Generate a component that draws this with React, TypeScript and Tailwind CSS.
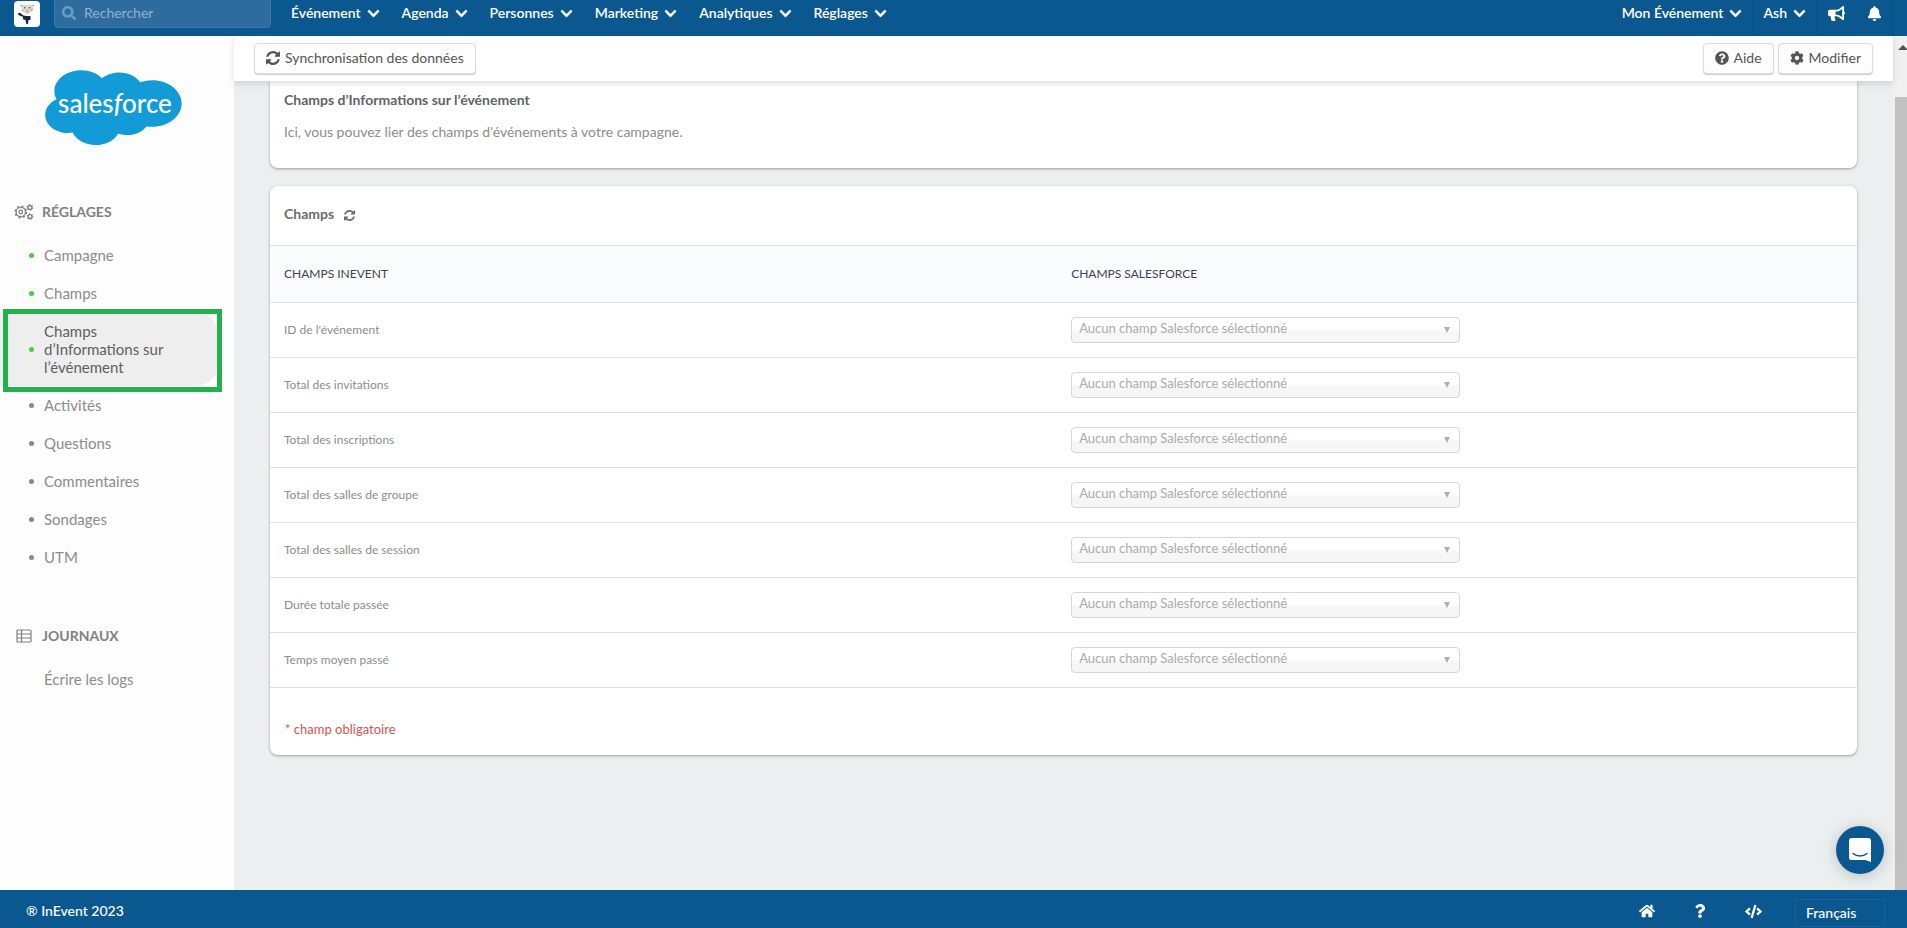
import React from "react";
import {
  FaBell,
  FaBullhorn,
  FaChevronDown,
  FaCode,
  FaCog,
  FaHome,
  FaQuestion,
  FaQuestionCircle,
  FaSearch,
} from "react-icons/fa";

const menus = ["Événement", "Agenda", "Personnes", "Marketing", "Analytiques", "Réglages"];

const settings = [
  { label: "Campagne", done: true },
  { label: "Champs", done: true },
  { label: "Champs d’Informations sur l’événement", done: true, active: true },
  { label: "Activités", done: false },
  { label: "Questions", done: false },
  { label: "Commentaires", done: false },
  { label: "Sondages", done: false },
  { label: "UTM", done: false },
];

const fields = [
  "ID de l'événement",
  "Total des invitations",
  "Total des inscriptions",
  "Total des salles de groupe",
  "Total des salles de session",
  "Durée totale passée",
  "Temps moyen passé",
];

function RefreshIcon({ className }: { className: string }) {
  return (
    <svg viewBox="0 0 1536 1536" fill="currentColor" className={className} aria-hidden="true">
      <path d="M1511 928q0 5-1 7-64 268-268 434.500T764 1536q-146 0-282.500-55T238 1324l-129 129q-19 19-45 19t-45-19-19-45V960q0-26 19-45t45-19h448q26 0 45 19t19 45-19 45l-137 137q71 66 161 102t187 36q134 0 250-65t186-179q11-17 53-117 8-23 30-23h192q13 0 22.500 9.500t9.500 22.500zm25-800v448q0 26-19 45t-45 19h-448q-26 0-45-19t-19-45 19-45l138-138Q969 256 768 256q-134 0-250 65T332 500q-11 17-53 117-8 23-30 23H50q-13 0-22.500-9.500T18 608v-7q65-268 270-434.500T768 0q146 0 284 55.500T1297 212l130-129q19-19 45-19t45 19 19 45z" />
    </svg>
  );
}

function GearsIcon() {
  return (
    <svg viewBox="0 0 20 16" className="h-4 w-5" fill="none" stroke="currentColor" strokeWidth="1.3" aria-hidden="true">
      <circle cx="6.800" cy="8" r="4.700" />
      <circle cx="6.800" cy="8" r="1.800" />
      <circle cx="6.800" cy="8" r="5.800" strokeDasharray="2.200 2.355" />
      <circle cx="16" cy="3.400" r="1.900" />
      <circle cx="16" cy="3.400" r="2.700" strokeDasharray="1.300 1.527" />
      <circle cx="16" cy="12.600" r="1.900" />
      <circle cx="16" cy="12.600" r="2.700" strokeDasharray="1.300 1.527" />
    </svg>
  );
}

function TableIcon() {
  return (
    <svg viewBox="0 0 16 14" className="h-[14px] w-4" fill="none" stroke="currentColor" aria-hidden="true">
      <rect x="1" y="1" width="14" height="12" rx="1" strokeWidth="1.200" />
      <path d="M1 5h14M1 9h14M5.500 1v12" strokeWidth="1.200" />
    </svg>
  );
}

function SalesforceLogo() {
  return (
    <svg viewBox="0 0 137 76" className="h-[76px] w-[137px]" role="img" aria-label="salesforce">
      <path
        transform="scale(.5018 .3930)"
        fill="#139bd8"
        d="M113.400 21.300c8.800-9.100 21-14.800 34.500-14.800 18 0 33.600 10 42 24.900 7.300-3.200 15.300-5.100 23.700-5.100 32.400 0 58.700 26.500 58.700 59.200s-26.300 59.200-58.700 59.200c-4 0-7.800-.4-11.600-1.100-7.400 13.100-21.400 22-37.400 22-6.700 0-13.100-1.600-18.800-4.300-7.400 17.500-24.700 29.800-44.900 29.800-21 0-39-13.300-45.800-31.900-3 .6-6.100 1-9.300 1C20.700 160.200.4 139.700.4 114.300c0-16.900 9.100-31.700 22.600-39.600-2.800-6.400-4.300-13.500-4.300-20.900C18.700 24.400 42.600.8 72.100.8c17 0 32.400 8.100 41.300 20.500"
      />
      <text x="70" y="43" textAnchor="middle" fill="#fff" fontSize="26" fontWeight="500">
        sales<tspan fontStyle="italic">f</tspan>orce
      </text>
    </svg>
  );
}

function BrandMark() {
  return (
    <svg viewBox="0 0 26 26" className="size-[26px] rounded bg-white" aria-hidden="true">
      <path d="M7 4l3-.500 3 .800 3-.800 3.500 1-.500 5-3 2.500-3 1.500-3-2-2-3.500z" fill="#dcd7d3" />
      <path d="M6.500 5l1.500-.800M19.800 4.600l-1.300-.600M8 9l1.500.800M18.500 8.500l-1.500.800" stroke="#8a7f78" strokeWidth="1" />
      <circle cx="10.800" cy="6.800" r=".8" fill="#4b4b4b" />
      <circle cx="15.600" cy="6.800" r=".8" fill="#4b4b4b" />
      <path d="M11.500 9.500h3.500l-1.700 2z" fill="#c98b66" />
      <path d="M4 12.200l2-.4 3.500 2.700 3 .5h4v4h-2l-.5 3.800-1.500.7-1-4.500-2.500-.7V16l-4.500-2z" fill="#16283c" />
    </svg>
  );
}

function Menu({ label }: { label: string }) {
  return (
    <button type="button" className="flex items-center gap-1.5 whitespace-nowrap">
      {label}
      <FaChevronDown className="size-[13px]" stroke="currentColor" strokeWidth="24" />
    </button>
  );
}

function ToolButton({ icon, children }: { icon: React.ReactNode; children: React.ReactNode }) {
  return (
    <button
      type="button"
      className="flex h-[31px] items-center gap-[5px] rounded border border-[#dcdcdc] bg-[#fdfdfd] px-[11px] pb-0.5 text-sm whitespace-nowrap text-[#555] shadow-[0_1px_1px_rgba(0,0,0,0.2)]"
    >
      {icon}
      {children}
    </button>
  );
}

function FieldSelect({ label }: { label: string }) {
  return (
    <div className="relative w-[389px]">
      <select
        disabled
        aria-label={label}
        className="block h-[26px] w-full appearance-none rounded border border-[#d6d6d6] bg-linear-to-b from-white from-45% to-[#f6f6f6] to-60% px-[7px] pb-[3px] text-[13px] text-[#aaa] opacity-100"
      >
        <option>Aucun champ Salesforce sélectionné</option>
      </select>
      <svg viewBox="0 0 6 6" className="pointer-events-none absolute top-[10px] right-[10px] size-1.5" aria-hidden="true">
        <path d="M0 0h6L3 6z" fill="#b0b0b0" />
      </svg>
    </div>
  );
}

export default function App() {
  return (
    <div className="flex h-screen flex-col overflow-hidden bg-[#ebeff0] font-[Lato,'Open_Sans',sans-serif] text-[#8c8c8c]">
      <header className="flex h-9 shrink-0 items-start justify-between bg-[#0b5890] text-sm font-semibold text-white">
        <div className="flex h-[26px] items-center">
          <a href="#accueil" aria-label="Accueil" className="ml-[14px] pt-0.5">
            <BrandMark />
          </a>
          <label className="relative -mt-2 ml-[14px] flex h-[38px] w-[217px] items-center gap-2 rounded border border-[#3a78a8] bg-[#2e6c9f] pt-2 pl-[7px] font-normal">
            <FaSearch className="size-[14px] text-[#6d9bc0]" stroke="currentColor" strokeWidth="20" />
            <input type="search" aria-label="Rechercher" placeholder="Rechercher" className="w-40 bg-transparent outline-none placeholder:text-[#8fb3cf]" />
          </label>
          <nav className="ml-5 flex gap-[22px]" aria-label="Menu principal">
            {menus.map((m) => (
              <Menu key={m} label={m} />
            ))}
          </nav>
        </div>
        <div className="mr-[14px] flex h-9 items-stretch [&>*]:border-r [&>*]:border-[#0a4f82] [&>*]:pb-[10px]">
          <div className="flex items-center pr-[10px]">
            <Menu label="Mon Événement" />
          </div>
          <div className="flex items-center px-[10px]">
            <Menu label="Ash" />
          </div>
          <div className="flex items-center gap-[22px] pr-[10px] pl-[11px]">
            <button type="button" aria-label="Annonces">
              <FaBullhorn className="size-[17px]" />
            </button>
            <button type="button" aria-label="Notifications">
              <FaBell className="size-[15px]" />
            </button>
          </div>
        </div>
      </header>

      <div className="flex min-h-0 flex-1">
        <aside className="w-[234px] shrink-0 bg-[#fdfdfd] text-[15px] leading-[18px]">
          <div className="flex pt-[34px] pl-[45px]">
            <SalesforceLogo />
          </div>
          <h2 className="mt-[57px] flex items-center gap-2 pl-[14px] text-sm leading-[18px] font-bold text-[#808080]">
            <GearsIcon />
            RÉGLAGES
          </h2>
          <ul className="mt-[15px]">
            {settings.map((s) => (
              <li key={s.label} className="relative w-[219px]">
                <a
                  href="#reglages"
                  className={
                    s.active
                      ? "flex items-center rounded-r-3xl bg-[#eee] py-2.5 pl-[29px] text-[#5f5f5f]"
                      : "flex items-center py-2.5 pl-[29px]"
                  }
                >
                  <span className={s.done ? "mt-px size-[5px] shrink-0 rounded-full bg-[#4ccb3f]" : "mt-px size-[5px] shrink-0 rounded-full bg-[#888]"} />
                  <span className="ml-2.5 w-[130px]">{s.label}</span>
                </a>
                {s.active && (
                  <span className="pointer-events-none absolute -top-[3px] -right-[3px] -bottom-[6px] left-[3px] border-[5px] border-[#22b14c]" />
                )}
              </li>
            ))}
          </ul>
          <h2 className="mt-[51px] flex items-center gap-[10px] pl-4 text-sm leading-[18px] font-bold text-[#808080]">
            <TableIcon />
            JOURNAUX
          </h2>
          <ul className="mt-[15px]">
            <li>
              <a href="#journaux" className="block py-2.5 pl-11">
                Écrire les logs
              </a>
            </li>
          </ul>
        </aside>

        <div className="flex min-w-0 flex-1 flex-col">
          <div className="relative z-10 flex h-[45px] shrink-0 items-start justify-between bg-white px-5 pt-[7px] shadow-[0_3px_6px_rgba(0,0,0,0.12)]">
            <ToolButton icon={<RefreshIcon className="size-[14px]" />}>Synchronisation des données</ToolButton>
            <div className="flex gap-1">
              <ToolButton icon={<FaQuestionCircle className="size-[14px]" />}>Aide</ToolButton>
              <ToolButton icon={<FaCog className="size-[14px]" />}>Modifier</ToolButton>
            </div>
          </div>

          <main className="flex-1 pr-9 pl-9">
            <section className="h-[87px] rounded-b-lg bg-white px-[14px] pt-2.5 shadow-[0_1px_3px_rgba(0,0,0,0.35)]">
              <h1 className="text-sm leading-[18px] font-bold text-[#62626a]">Champs d’Informations sur l’événement</h1>
              <p className="mt-[14px] text-sm leading-[18px]">Ici, vous pouvez lier des champs d'événements à votre campagne.</p>
            </section>

            <section className="mt-[18px] rounded-lg bg-white shadow-[0_1px_3px_rgba(0,0,0,0.35)]">
              <div className="flex h-[59px] items-center gap-2.5 px-[14px] pb-[3px]">
                <h2 className="text-sm font-bold text-[#6c6c6c]">Champs</h2>
                <button type="button" aria-label="Actualiser" className="pt-0.5">
                  <RefreshIcon className="size-[11px] text-[#6a6a6a]" />
                </button>
              </div>
              <table className="w-full table-fixed border-collapse text-left text-xs">
                <thead>
                  <tr className="h-[57px] border-y border-[#dfe1e3] bg-[#fafbfd] text-[#3c434d]">
                    <th className="w-[49.6%] px-[14px] font-normal">CHAMPS INEVENT</th>
                    <th className="px-[14px] font-normal">CHAMPS SALESFORCE</th>
                  </tr>
                </thead>
                <tbody>
                  {fields.map((f) => (
                    <tr key={f} className="h-[55px] border-b border-[#dfe1e3]">
                      <td className="px-[14px]">{f}</td>
                      <td className="px-[14px]">
                        <FieldSelect label={f} />
                      </td>
                    </tr>
                  ))}
                </tbody>
              </table>
              <p className="px-[15px] pt-8 pb-[17px] text-[13px] leading-[18px] text-[#d9534f]">* champ obligatoire</p>
            </section>
          </main>
        </div>

        <div className="flex w-[14px] shrink-0 flex-col bg-[#f0f0f0]" aria-hidden="true">
          <svg viewBox="0 0 14 61" className="h-[61px] w-[14px]">
            <path d="M5 14l5-5 5 5z" fill="#505050" />
          </svg>
          <div className="ml-0.5 flex-1 bg-[#c1c1c1]" />
        </div>
      </div>

      <footer className="flex h-[38px] shrink-0 items-center justify-between bg-[#0b5890] pl-[26px] text-sm text-white">
        <p className="pt-1 font-medium">® InEvent 2023</p>
        <div className="flex items-center pt-1 pr-[22px]">
          <a href="#accueil" aria-label="Accueil" className="mr-[38px]">
            <FaHome className="size-4" />
          </a>
          <a href="#aide" aria-label="Aide" className="mr-[38px]">
            <FaQuestion className="size-[14px]" />
          </a>
          <a href="#code" aria-label="Code" className="mr-[33px]">
            <FaCode className="size-[17px]" />
          </a>
          <select aria-label="Langue" className="mt-1 h-7 w-[90px] appearance-none border border-[#1a6299] bg-[#0b5890] px-2.5 font-medium">
            <option>Français</option>
          </select>
        </div>
      </footer>

      <button
        type="button"
        aria-label="Ouvrir la messagerie"
        className="fixed right-[23px] bottom-[54px] z-20 flex size-12 items-center justify-center rounded-full bg-[#0b5890] shadow-[0_2px_16px_rgba(0,0,0,0.2)]"
      >
        <svg viewBox="0 0 22 24" className="h-6 w-[22px]" aria-hidden="true">
          <path d="M2.500 0h17A2.500 2.500 0 0 1 22 2.500V24l-5.500-2h-14A2.500 2.500 0 0 1 0 19.500v-17A2.500 2.500 0 0 1 2.500 0z" fill="#fff" />
          <path d="M4 15.500c4 3.400 10 3.400 14 0" fill="none" stroke="#0b5890" strokeWidth="1.500" strokeLinecap="round" />
        </svg>
      </button>
    </div>
  );
}
